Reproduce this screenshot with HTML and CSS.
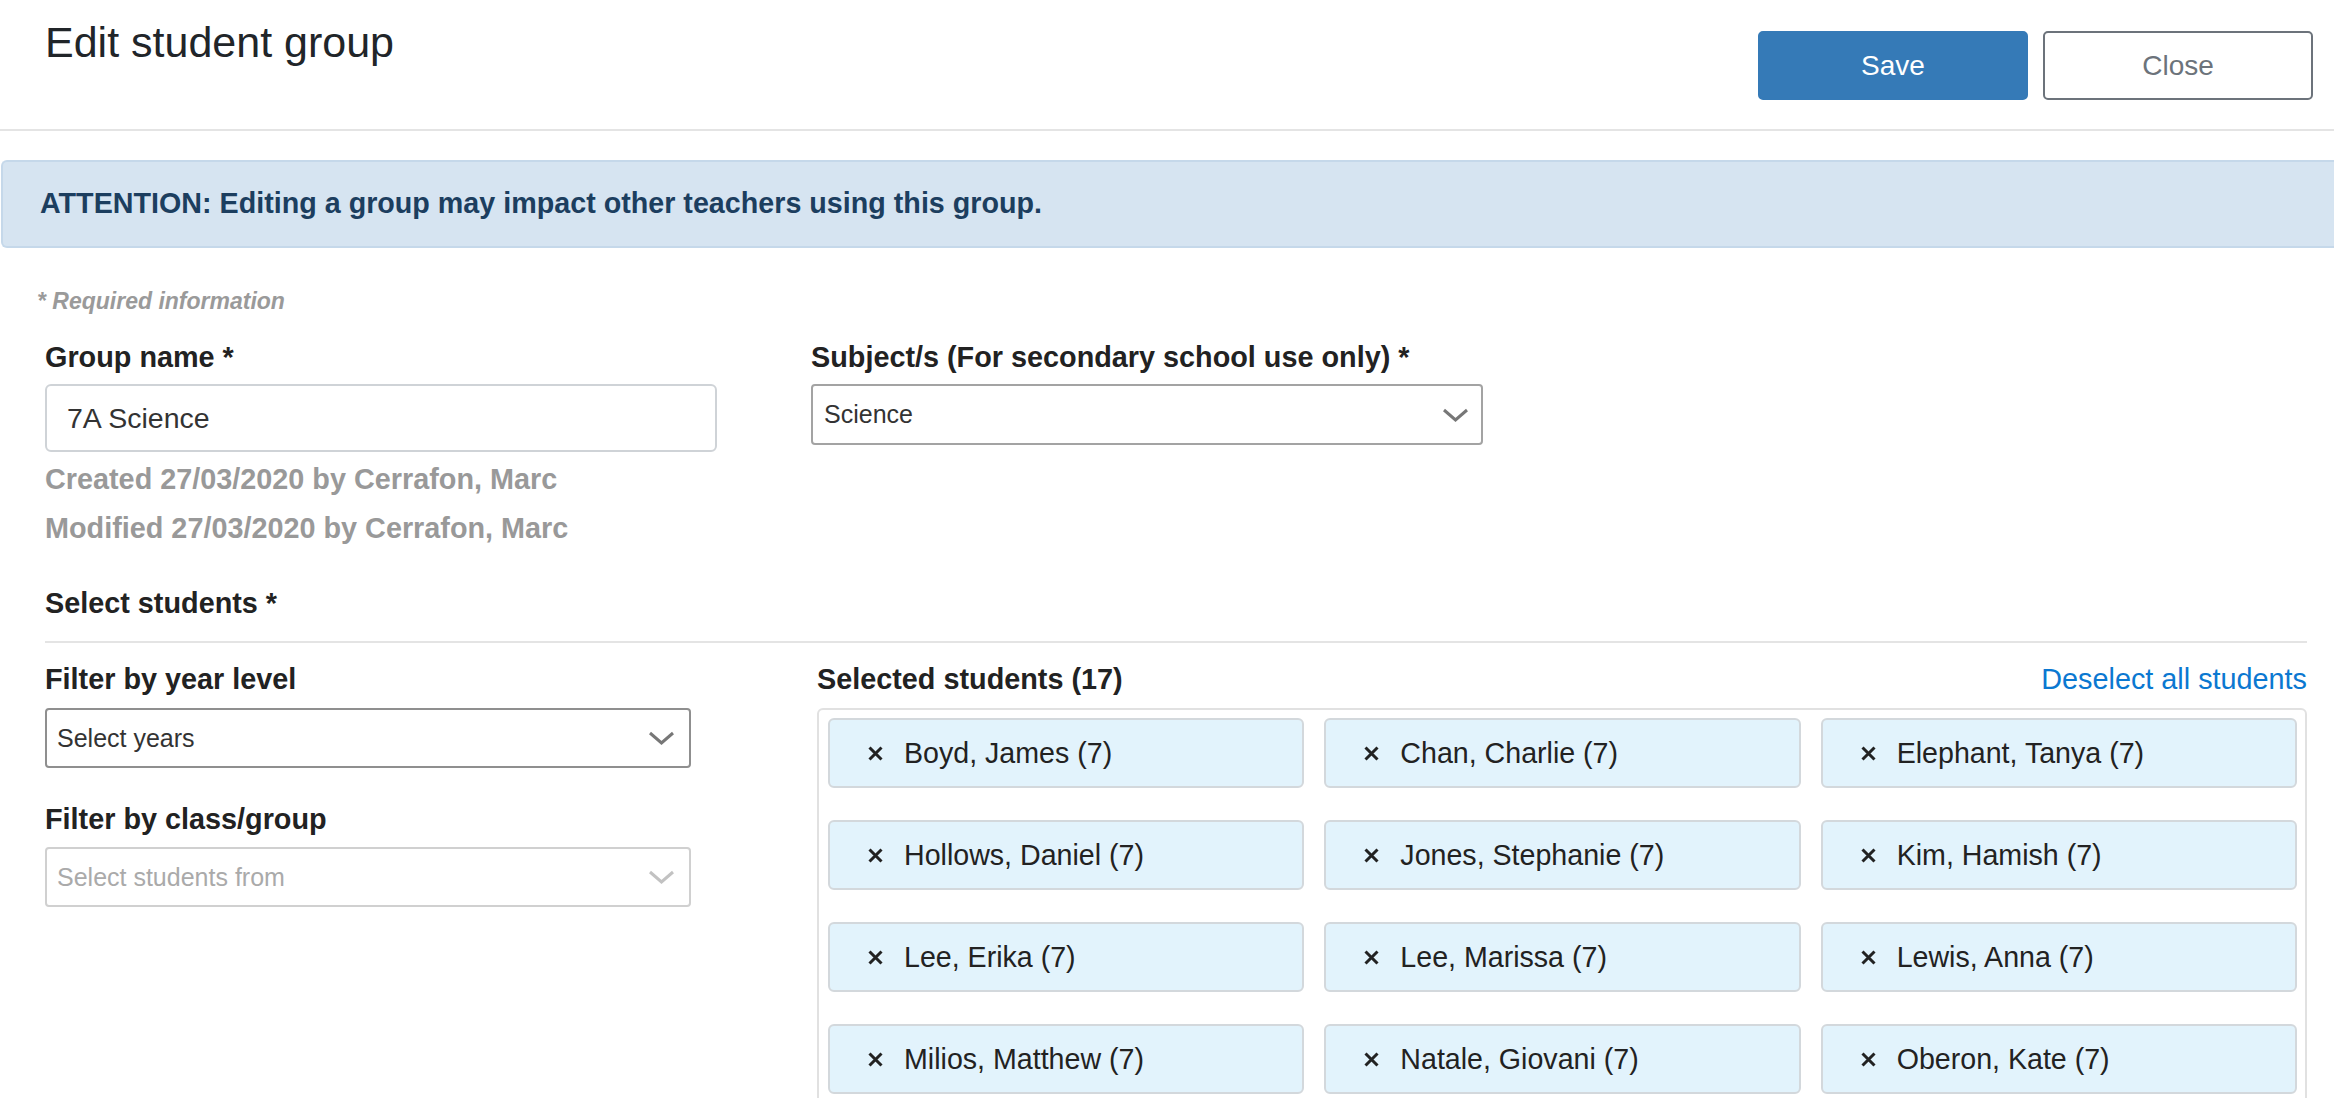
FILE: index.html
```html
<!DOCTYPE html>
<html lang="en">
<head>
  <meta charset="UTF-8" />
  <title>Edit student group</title>
  <link rel="stylesheet" href="styles.css">
</head>
<body>
  <div class="page-header">
    <h1>Edit student group</h1>
    <div class="header-actions">
      <button class="btn btn-primary">Save</button>
      <button class="btn btn-outline">Close</button>
    </div>
  </div>

  <div class="alert-info">ATTENTION: Editing a group may impact other teachers using this group.</div>

  <div class="form-body">
    <p class="required-note">* Required information</p>

    <div class="top-row">
      <div class="field">
        <label class="field-label">Group name *</label>
        <div class="text-input">7A Science</div>
        <p class="meta">Created 27/03/2020 by Cerrafon, Marc</p>
        <p class="meta">Modified 27/03/2020 by Cerrafon, Marc</p>
      </div>
      <div class="field subject-field">
        <label class="field-label">Subject/s (For secondary school use only) *</label>
        <div class="select-box">
          <span>Science</span>
          <svg class="chevron" width="27" height="14" viewBox="0 0 27 14"><polyline points="2,2 13.5,12 25,2" /></svg>
        </div>
      </div>
    </div>

    <h3 class="section-title">Select students *</h3>

    <div class="students">
      <div class="filters">
        <label class="field-label">Filter by year level</label>
        <div class="select-box filter-select">
          <span>Select years</span>
          <svg class="chevron" width="27" height="14" viewBox="0 0 27 14"><polyline points="2,2 13.5,12 25,2" /></svg>
        </div>
        <label class="field-label second">Filter by class/group</label>
        <div class="select-box filter-select disabled">
          <span>Select students from</span>
          <svg class="chevron" width="27" height="14" viewBox="0 0 27 14"><polyline points="2,2 13.5,12 25,2" /></svg>
        </div>
      </div>

      <div class="selected">
        <div class="selected-header">
          <label class="field-label">Selected students (17)</label>
          <a href="#" class="link">Deselect all students</a>
        </div>
        <div class="chip-box">
          <div class="chip"><svg class="x" width="15" height="15" viewBox="0 0 15 15"><path d="M1.5 1.5 L13.5 13.5 M13.5 1.5 L1.5 13.5" /></svg>Boyd, James (7)</div>
          <div class="chip"><svg class="x" width="15" height="15" viewBox="0 0 15 15"><path d="M1.5 1.5 L13.5 13.5 M13.5 1.5 L1.5 13.5" /></svg>Chan, Charlie (7)</div>
          <div class="chip"><svg class="x" width="15" height="15" viewBox="0 0 15 15"><path d="M1.5 1.5 L13.5 13.5 M13.5 1.5 L1.5 13.5" /></svg>Elephant, Tanya (7)</div>
          <div class="chip"><svg class="x" width="15" height="15" viewBox="0 0 15 15"><path d="M1.5 1.5 L13.5 13.5 M13.5 1.5 L1.5 13.5" /></svg>Hollows, Daniel (7)</div>
          <div class="chip"><svg class="x" width="15" height="15" viewBox="0 0 15 15"><path d="M1.5 1.5 L13.5 13.5 M13.5 1.5 L1.5 13.5" /></svg>Jones, Stephanie (7)</div>
          <div class="chip"><svg class="x" width="15" height="15" viewBox="0 0 15 15"><path d="M1.5 1.5 L13.5 13.5 M13.5 1.5 L1.5 13.5" /></svg>Kim, Hamish (7)</div>
          <div class="chip"><svg class="x" width="15" height="15" viewBox="0 0 15 15"><path d="M1.5 1.5 L13.5 13.5 M13.5 1.5 L1.5 13.5" /></svg>Lee, Erika (7)</div>
          <div class="chip"><svg class="x" width="15" height="15" viewBox="0 0 15 15"><path d="M1.5 1.5 L13.5 13.5 M13.5 1.5 L1.5 13.5" /></svg>Lee, Marissa (7)</div>
          <div class="chip"><svg class="x" width="15" height="15" viewBox="0 0 15 15"><path d="M1.5 1.5 L13.5 13.5 M13.5 1.5 L1.5 13.5" /></svg>Lewis, Anna (7)</div>
          <div class="chip"><svg class="x" width="15" height="15" viewBox="0 0 15 15"><path d="M1.5 1.5 L13.5 13.5 M13.5 1.5 L1.5 13.5" /></svg>Milios, Matthew (7)</div>
          <div class="chip"><svg class="x" width="15" height="15" viewBox="0 0 15 15"><path d="M1.5 1.5 L13.5 13.5 M13.5 1.5 L1.5 13.5" /></svg>Natale, Giovani (7)</div>
          <div class="chip"><svg class="x" width="15" height="15" viewBox="0 0 15 15"><path d="M1.5 1.5 L13.5 13.5 M13.5 1.5 L1.5 13.5" /></svg>Oberon, Kate (7)</div>
        </div>
      </div>
    </div>
  </div>
</body>
</html>
```

FILE: styles.css
```css
* { box-sizing: border-box; }
html, body {
  margin: 0;
  padding: 0;
}
body {
  font-family: "Liberation Sans", Arial, sans-serif;
  background: #ffffff;
  color: #222;
  overflow: hidden;
}

.page-header {
  display: flex;
  justify-content: space-between;
  align-items: flex-start;
  height: 131px;
  padding: 17px 21px 0 45px;
  border-bottom: 2px solid #e4e4e4;
}
.page-header h1 {
  margin: 0;
  font-size: 43px;
  line-height: 50px;
  font-weight: normal;
  color: #212529;
}
.header-actions {
  display: flex;
  gap: 15px;
  margin-top: 14px;
}
.btn {
  width: 270px;
  height: 69px;
  font-family: inherit;
  font-size: 28px;
  border-radius: 5px;
  cursor: pointer;
}
.btn-primary {
  background: #357ab7;
  border: 2px solid #357ab7;
  color: #fff;
}
.btn-outline {
  background: #fff;
  border: 2px solid #6c737b;
  color: #6c737b;
}

.alert-info {
  margin: 29px 0 0 1px;
  padding: 24px 37px 26px;
  line-height: 34px;
  font-size: 28.7px;
  font-weight: bold;
  color: #1c3e5f;
  background: #d6e4f1;
  border: 2px solid #c5d8ea;
  border-right: none;
  border-radius: 6px 0 0 6px;
}

.form-body {
  padding: 0 27px 0 45px;
}
.required-note {
  margin: 40px 0 0 -8px;
  font-size: 23px;
  line-height: 26px;
  font-style: italic;
  font-weight: bold;
  color: #9a9a9a;
}

.top-row {
  display: flex;
  gap: 94px;
  margin-top: 27px;
}
.field {
  width: 672px;
}
.field-label {
  display: block;
  font-size: 28.8px;
  line-height: 32px;
  font-weight: bold;
  color: #222;
}
.text-input {
  margin-top: 11px;
  height: 68px;
  padding: 0 20px;
  display: flex;
  align-items: center;
  font-size: 28.5px;
  color: #333;
  border: 2px solid #cfd3d7;
  border-radius: 6px;
}
.meta {
  margin: 0;
  font-size: 28.8px;
  line-height: 49px;
  font-weight: bold;
  color: #999;
}
.text-input + .meta {
  margin-top: 3px;
}

.select-box {
  margin-top: 11px;
  height: 61px;
  padding: 0 12px 0 11px;
  display: flex;
  justify-content: space-between;
  align-items: center;
  font-size: 25px;
  color: #333;
  border: 2px solid #a3a3a3;
  border-radius: 4px;
}
.chevron polyline {
  fill: none;
  stroke: #777;
  stroke-width: 3;
}

.section-title {
  margin: 34px 0 0;
  font-size: 28.8px;
  line-height: 32px;
  padding-bottom: 22px;
  border-bottom: 2px solid #e4e4e4;
}

.students {
  display: flex;
  gap: 126px;
  margin-top: 20px;
}
.filters {
  width: 646px;
  flex-shrink: 0;
}
.filter-select {
  margin-top: 13px;
  height: 60px;
  padding: 0 14px 0 10px;
  border-color: #8f8f8f;
}
.filters .second {
  margin-top: 35px;
}
.filter-select.disabled {
  margin-top: 12px;
  color: #aaa;
  border-color: #d0d0d0;
}
.filter-select.disabled .chevron polyline {
  stroke: #c2c2c2;
}

.selected {
  flex-grow: 1;
}
.selected-header {
  display: flex;
  justify-content: space-between;
  align-items: baseline;
}
.link {
  font-size: 28.8px;
  line-height: 32px;
  color: #0b78d1;
  text-decoration: none;
}
.chip-box {
  margin-top: 13px;
  padding: 8px 8px 8px 9px;
  border: 2px solid #e1e1e1;
  border-radius: 6px;
  display: grid;
  grid-template-columns: repeat(3, 1fr);
  gap: 32px 20px;
}
.chip {
  height: 70px;
  padding-left: 38px;
  display: flex;
  align-items: center;
  gap: 21px;
  font-size: 28.6px;
  color: #222;
  background: #e2f3fc;
  border: 2px solid #d3d8dc;
  border-radius: 6px;
}
.chip .x path {
  fill: none;
  stroke: #222;
  stroke-width: 3;
}
```
